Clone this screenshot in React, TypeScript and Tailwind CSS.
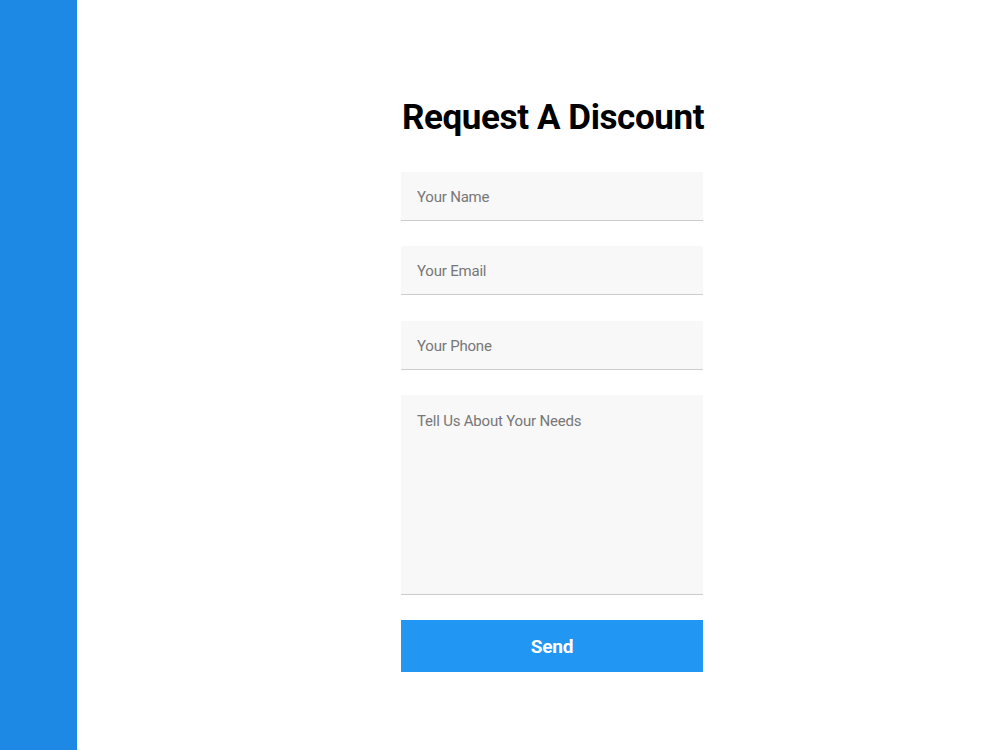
export default function App() {
  const font = { fontFamily: '"Roboto", "Liberation Sans", sans-serif' };
  return (
    <div className="flex w-[1000px] h-[750px] bg-white" style={font}>
      <div className="w-[77px] h-full bg-[#1e88e5] shrink-0" />
      <div className="flex-1 pl-[324px] pt-[94px]">
        <div className="w-[302px]">
          <h1 className="text-[35px] leading-[48px] font-bold text-black tracking-[-0.4px] whitespace-nowrap pl-px">
            Request A Discount
          </h1>
          <div className="mt-[30px] flex flex-col gap-[25.3px]">
            {["Your Name", "Your Email", "Your Phone"].map((p) => (
              <input
                key={p}
                placeholder={p}
                className="h-[49px] w-full bg-[#f8f8f8] border-b border-[#cccccc] px-4 pt-[2px] text-[15px] text-[#555] placeholder:text-[#777] outline-none tracking-[-0.2px]"
              />
            ))}
            <textarea
              placeholder="Tell Us About Your Needs"
              className="h-[200px] w-full bg-[#f8f8f8] border-b border-[#cccccc] px-4 pt-[15px] text-[15px] text-[#555] placeholder:text-[#777] outline-none resize-none tracking-[-0.2px]"
            />
            <button className="h-[52px] w-full bg-[#2196f3] text-white text-[19px] font-bold tracking-[-0.2px] pt-[3px]">
              Send
            </button>
          </div>
        </div>
      </div>
    </div>
  );
}
